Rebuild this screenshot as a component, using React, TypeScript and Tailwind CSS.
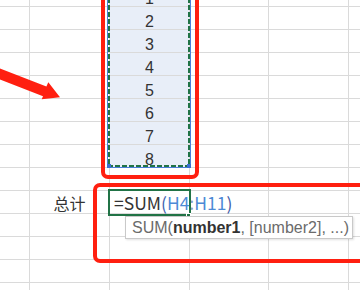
const cols = ["a", "g", "h", "i", "j", "k"];
const rows = Array.from({ length: 14 }, (_, i) => i);

function Cell({ row, col }: { row: number; col: string }) {
  const inRange = col === "h" && row < 8;
  let content: React.ReactNode = null;

  if (inRange) {
    content = <span className="font-['Liberation_Sans',sans-serif] text-[16px] leading-[15px]">{row + 1}</span>;
  }
  if (row === 9 && col === "g") {
    content = <span className="text-[16px]">总计</span>;
  }
  if (row === 9 && col === "h") {
    content = (
      <span className="absolute left-[4px] bottom-0 whitespace-nowrap text-[17.5px] leading-[20px] text-[#333]">
        =SUM<span className="text-[#3f63b0]">(</span>
        <span className="text-[#4d8ad6]">H4</span>
        <span className="text-[#8aa0c8]">:</span>
        <span className="text-[#4d8ad6]">H11</span>
        <span className="text-[#3f5aa6]">)</span>
      </span>
    );
  }

  return (
    <div
      className={`relative flex items-end justify-center border-r border-b border-[#dadada] leading-[20px] text-[#333] ${
        inRange ? "bg-[#e8eef8]" : "bg-white"
      } ${row === 9 && col === "h" ? "z-10 overflow-visible" : ""}`}
    >
      {content}
    </div>
  );
}

export default function App() {
  return (
    <div className="relative w-[360px] h-[290px] overflow-hidden bg-white font-['Noto_Sans_CJK_SC',sans-serif] text-[18px]">
      <div className="-mt-[16px] grid grid-cols-[30px_80px_80px_79px_80px_80px] auto-rows-[23px]">
        {rows.map((r) => cols.map((c) => <Cell key={`${r}-${c}`} row={r} col={c} />))}
      </div>

      {/* reference range H4:H11 */}
      <div className="absolute left-[107px] top-[-10px] w-[84px] h-[178px] border border-[#4a7fd8]">
        <svg className="w-full h-full" viewBox="0 0 82 176">
          <g stroke="#217346" strokeWidth="2" strokeDasharray="5 2" fill="none">
            <line x1="1" y1="0" x2="1" y2="176" />
            <line x1="81" y1="0" x2="81" y2="176" />
            <line x1="0" y1="175" x2="82" y2="175" />
          </g>
        </svg>
      </div>
      <div className="absolute left-[107px] top-[164px] w-[4px] h-[4px] bg-[#3a6fd0]" />
      <div className="absolute left-[187px] top-[164px] w-[4px] h-[4px] bg-[#3a6fd0]" />

      {/* active cell */}
      <div className="absolute left-[108px] top-[189px] w-[83px] h-[27px] border-2 border-[#217346] z-20" />
      <div className="absolute left-[186px] top-[213px] w-[5px] h-[5px] bg-[#217346] border border-white z-20" />

      {/* function hint */}
      <div className="absolute left-[125px] top-[216px] w-[228px] h-[23px] flex items-center pl-[6px] bg-white border border-[#c9c9c9] shadow-[1px_1px_2px_rgba(0,0,0,0.12)] z-30 font-['Liberation_Sans',sans-serif] text-[16px] text-[#6b6b6b] whitespace-nowrap">
        SUM(<b className="text-[#333]">number1</b>, [number2], ...)
      </div>

      {/* annotations */}
      <div className="absolute left-[101px] top-[-20px] w-[98px] h-[199px] border-4 border-[#ff1f10] rounded-[7px] z-40" />
      <div className="absolute left-[93px] top-[183px] w-[300px] h-[80px] border-4 border-[#ff1f10] rounded-[7px] z-40" />
      <svg className="absolute left-0 top-0 w-[70px] h-[110px] z-40" viewBox="0 0 70 110">
        <polygon
          fill="#ff1f10"
          points="0,68.5 46.4,86.5 48.3,82.3 60,97.3 41.7,99.3 43,96.2 0,79.5"
        />
      </svg>
    </div>
  );
}
